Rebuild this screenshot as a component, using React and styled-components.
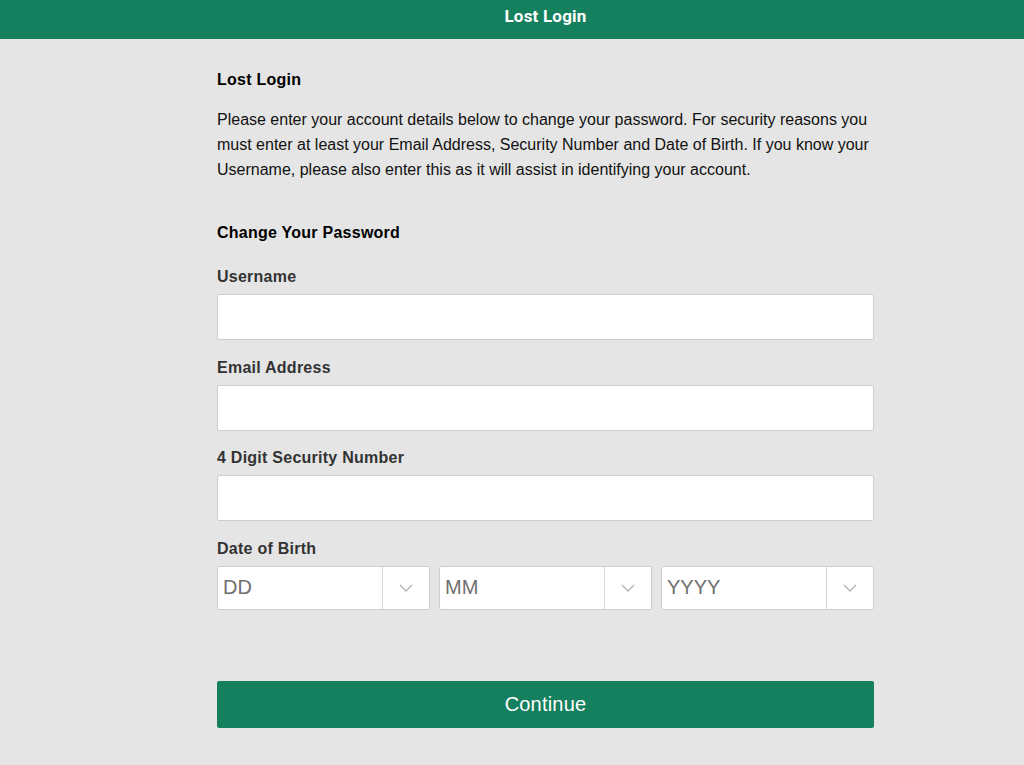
import React from 'react';
import styled, { createGlobalStyle } from 'styled-components';

const GlobalStyle = createGlobalStyle`
  html, body {
    margin: 0;
    padding: 0;
    background: #e5e5e5;
    font-family: 'Liberation Sans', Arial, sans-serif;
  }
`;

const Page = styled.div`
  min-height: 765px;
  background: #e5e5e5;
`;

const TopBar = styled.header`
  height: 39px;
  background: #14805e;
  display: flex;
  align-items: center;
`;

const TopTitle = styled.h1`
  width: 657px;
  margin: 0 0 0 217px;
  text-align: center;
  font-family: Roboto, 'Liberation Sans', sans-serif;
  font-weight: 700;
  font-size: 17px;
  letter-spacing: 0.2px;
  color: #fff;
  line-height: 20px;
  padding-bottom: 8px;
`;

const Content = styled.main`
  width: 657px;
  margin-left: 217px;
  padding-top: 32px;
`;

const Heading = styled.h2`
  margin: 0;
  font-size: 16px;
  line-height: 18px;
  font-weight: 700;
  letter-spacing: 0.25px;
  color: #000;
`;

const Intro = styled.p`
  margin: 18px 0 42px;
  font-size: 16px;
  line-height: 25px;
  letter-spacing: 0;
  color: #111;
`;

const Form = styled.form`
  display: flex;
  flex-direction: column;
`;

const Field = styled.div`
  display: flex;
  flex-direction: column;
  margin-top: ${p => p.$first ? '26px' : '18.5px'};
`;

const Label = styled.label`
  font-size: 16px;
  line-height: 18px;
  font-weight: 700;
  letter-spacing: 0.25px;
  color: #333;
  margin-bottom: 8px;
`;

const TextInput = styled.input`
  box-sizing: border-box;
  height: 46px;
  width: 100%;
  border: 1px solid #cdcdcd;
  border-radius: 2px;
  background: #fff;
  padding: 0 10px;
  font-size: 16px;
  font-family: inherit;
  outline: none;
`;

const DateRow = styled.div`
  display: grid;
  grid-template-columns: repeat(3, 1fr);
  column-gap: 9px;
`;

const SelectBox = styled.div`
  box-sizing: border-box;
  height: 44px;
  display: flex;
  background: #fff;
  border: 1px solid #cdcdcd;
  border-radius: 2px;
`;

const SelectValue = styled.div`
  flex: 1;
  display: flex;
  align-items: center;
  padding-left: 5px;
  font-size: 20px;
  color: #707070;
`;

const SelectArrow = styled.div`
  width: 46px;
  border-left: 1px solid #d6d6d6;
  display: flex;
  align-items: center;
  justify-content: center;
`;

const Button = styled.button`
  margin-top: 71px;
  height: 47px;
  width: 100%;
  border: none;
  border-radius: 2px;
  background: #14805e;
  color: #fff;
  font-family: 'Liberation Sans', Arial, sans-serif;
  font-size: 20px;
  letter-spacing: 0.2px;
  cursor: pointer;
`;

const Chevron = () => (
  <svg width="14" height="8" viewBox="0 0 14 8" fill="none">
    <path d="M1 1l6 6 6-6" stroke="#b5b5b5" strokeWidth="1.3" />
  </svg>
);

const DateSelect = ({ placeholder }) => (
  <SelectBox>
    <SelectValue>{placeholder}</SelectValue>
    <SelectArrow><Chevron /></SelectArrow>
  </SelectBox>
);

export default function App() {
  return (
    <Page>
      <GlobalStyle />
      <TopBar>
        <TopTitle>Lost Login</TopTitle>
      </TopBar>
      <Content>
        <Heading>Lost Login</Heading>
        <Intro>
          Please enter your account details below to change your password. For security reasons you
          must enter at least your Email Address, Security Number and Date of Birth. If you know your
          Username, please also enter this as it will assist in identifying your account.
        </Intro>
        <Heading>Change Your Password</Heading>
        <Form onSubmit={e => e.preventDefault()}>
          <Field $first>
            <Label>Username</Label>
            <TextInput type="text" />
          </Field>
          <Field>
            <Label>Email Address</Label>
            <TextInput type="email" />
          </Field>
          <Field>
            <Label>4 Digit Security Number</Label>
            <TextInput type="text" />
          </Field>
          <Field>
            <Label>Date of Birth</Label>
            <DateRow>
              <DateSelect placeholder="DD" />
              <DateSelect placeholder="MM" />
              <DateSelect placeholder="YYYY" />
            </DateRow>
          </Field>
          <Button type="submit">Continue</Button>
        </Form>
      </Content>
    </Page>
  );
}
